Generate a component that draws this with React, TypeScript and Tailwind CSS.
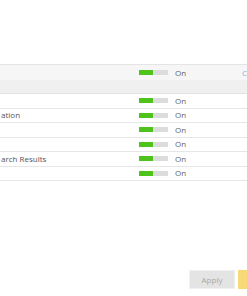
const rows = ["", "ation", "", "", "arch Results", ""];

const Toggle = () => (
  <div className="flex h-[5px] w-[29px] shrink-0">
    <div className="h-full w-[14px] bg-[#4fc31b]" />
    <div className="h-full flex-1 bg-[#dcdcdc]" />
  </div>
);

export default function App() {
  return (
    <div
      className="relative h-[296px] w-[247px] overflow-hidden bg-white text-[8px] text-[#555]"
      style={{ fontFamily: '"Open Sans", "Noto Sans", sans-serif' }}
    >
      <div className="mt-[64px] border-t border-[#e4e4e4]">
        <div className="flex h-[15px] items-center bg-[#f6f6f6]">
          <div className="w-[139px] shrink-0" />
          <Toggle />
          <span className="ml-[7px] w-[67px] shrink-0 text-[#5f5f5f]">On</span>
          <span className="text-[#7fb9d8]">C</span>
        </div>
        <div className="h-[14px] border-b border-[#e2e2e2] bg-[#f0f0f0]" />
        {rows.map((label, i) => (
          <div
            key={i}
            className="flex h-[14.5px] items-center border-b border-[#e6e6e6]"
          >
            <div className="w-[139px] shrink-0 whitespace-nowrap pl-[1px]">
              {label}
            </div>
            <Toggle />
            <span className="ml-[7px] text-[#5f5f5f]">On</span>
          </div>
        ))}
      </div>
      <div className="mt-[89px] flex gap-[3px] pl-[189px]">
        <button className="h-[19px] w-[46px] shrink-0 border border-[#f0f0f0] bg-[#e4e4e4] p-[2px] text-[8px] text-[#a8a8a8]">
          Apply
        </button>
        <button className="h-[19px] w-[40px] shrink-0 bg-[#f8d978]" />
      </div>
    </div>
  );
}
